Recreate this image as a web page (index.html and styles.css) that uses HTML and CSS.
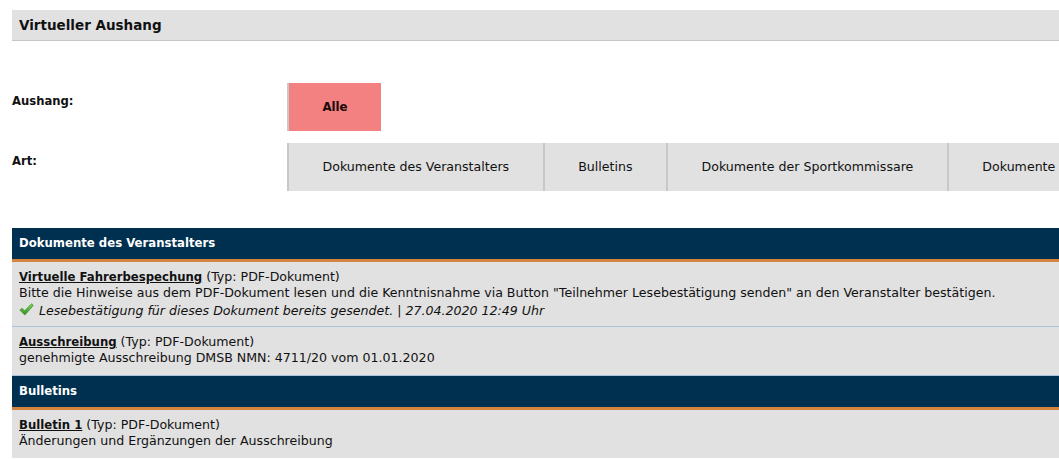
FILE: index.html
```html
<!DOCTYPE html>
<html lang="de">
<head>
<meta charset="utf-8">
<title>Virtueller Aushang</title>
<link rel="stylesheet" href="styles.css">
</head>
<body>
<div class="page">
  <div class="titlebar">Virtueller Aushang</div>

  <div class="filters">
    <div class="filter-row">
      <div class="filter-label">Aushang:</div>
      <div class="filter-options">
        <div class="opt opt-active opt-alle">Alle</div>
      </div>
    </div>
    <div class="filter-row">
      <div class="filter-label">Art:</div>
      <div class="filter-options">
        <div class="opt opt-tab">Dokumente des Veranstalters</div>
        <div class="opt opt-tab">Bulletins</div>
        <div class="opt opt-tab">Dokumente der Sportkommissare</div>
        <div class="opt opt-tab">Dokumente</div>
      </div>
    </div>
  </div>

  <div class="section">
    <div class="section-head">Dokumente des Veranstalters</div>
    <div class="item">
      <div class="item-line"><a class="doc-link" href="#">Virtuelle Fahrerbespechung</a> (Typ: PDF-Dokument)</div>
      <div class="item-line">Bitte die Hinweise aus dem PDF-Dokument lesen und die Kenntnisnahme via Button "Teilnehmer Lesebestätigung senden" an den Veranstalter bestätigen.</div>
      <div class="item-line confirm">
        <svg class="check" viewBox="0 0 16 14" width="15" height="13" aria-hidden="true">
          <defs>
            <linearGradient id="g" x1="0" y1="0" x2="0" y2="1">
              <stop offset="0" stop-color="#7ed957"/>
              <stop offset="1" stop-color="#2f8f1f"/>
            </linearGradient>
          </defs>
          <path d="M0.8 7.6 L3.2 5.6 L6 8.4 L13.4 0.8 L15.4 2.6 L6.2 13 Z" fill="url(#g)" stroke="#2a7a1a" stroke-width="0.6" stroke-linejoin="round"/>
        </svg>
        <em>Lesebestätigung für dieses Dokument bereits gesendet. | 27.04.2020 12:49 Uhr</em>
      </div>
    </div>
    <div class="item">
      <div class="item-line"><a class="doc-link" href="#">Ausschreibung</a> (Typ: PDF-Dokument)</div>
      <div class="item-line">genehmigte Ausschreibung DMSB NMN: 4711/20 vom 01.01.2020</div>
    </div>
  </div>

  <div class="section">
    <div class="section-head">Bulletins</div>
    <div class="item">
      <div class="item-line"><a class="doc-link" href="#">Bulletin 1</a> (Typ: PDF-Dokument)</div>
      <div class="item-line">Änderungen und Ergänzungen der Ausschreibung</div>
    </div>
  </div>
</div>
</body>
</html>
```

FILE: styles.css
```css
html, body {
  margin: 0;
  padding: 0;
  background: #ffffff;
}
body {
  font-family: "DejaVu Sans", Verdana, sans-serif;
  font-size: 12.6px;
  color: #111111;
}
.page {
  padding: 10px 0 0 12px;
  overflow: hidden;
}
.titlebar {
  background: #e1e1e1;
  border-bottom: 1px solid #c6c6c6;
  height: 30px;
  line-height: 31px;
  padding-left: 7px;
  font-weight: bold;
  font-size: 13.5px;
}
.filters {
  margin-top: 42px;
  display: flex;
  flex-direction: column;
  gap: 12px;
}
.filter-row {
  display: flex;
}
.filter-label {
  width: 275px;
  flex: none;
  font-weight: bold;
  font-size: 11.6px;
  padding-top: 11px;
}
.filter-options {
  display: flex;
  flex-wrap: nowrap;
  white-space: nowrap;
}
.opt {
  height: 48px;
  line-height: 48px;
  box-sizing: border-box;
  border-left: 2px solid #c8c8c8;
  text-align: center;
  flex: none;
}
.opt-alle {
  width: 94px;
  background: #f38181;
  font-weight: bold;
  font-size: 11.8px;
  color: #1a0a0a;
  line-height: 49px;
}
.opt-tab {
  background: #e1e1e1;
  padding: 0 33.5px;
}
.filters + .section {
  margin-top: 37px;
}
.section-head {
  background: #00304f;
  color: #ffffff;
  font-weight: bold;
  font-size: 11.7px;
  height: 31px;
  line-height: 31px;
  padding-left: 7px;
  border-bottom: 3px solid #d4843c;
}
.item {
  background: #e1e1e1;
  border-bottom: 1px solid #a9c2db;
  padding: 7px 7px 9px;
}
.section:last-child .item:last-child {
  border-bottom: none;
}
.item-line {
  line-height: 16px;
  white-space: nowrap;
}
.doc-link {
  color: #111111;
  font-weight: bold;
  font-size: 11.7px;
  text-decoration: underline;
}
.confirm {
  display: flex;
  align-items: center;
  gap: 5px;
  margin-top: 2px;
  margin-bottom: -2px;
}
.confirm em {
  font-style: italic;
}
.check {
  flex: none;
  margin-top: -3px;
}
```
